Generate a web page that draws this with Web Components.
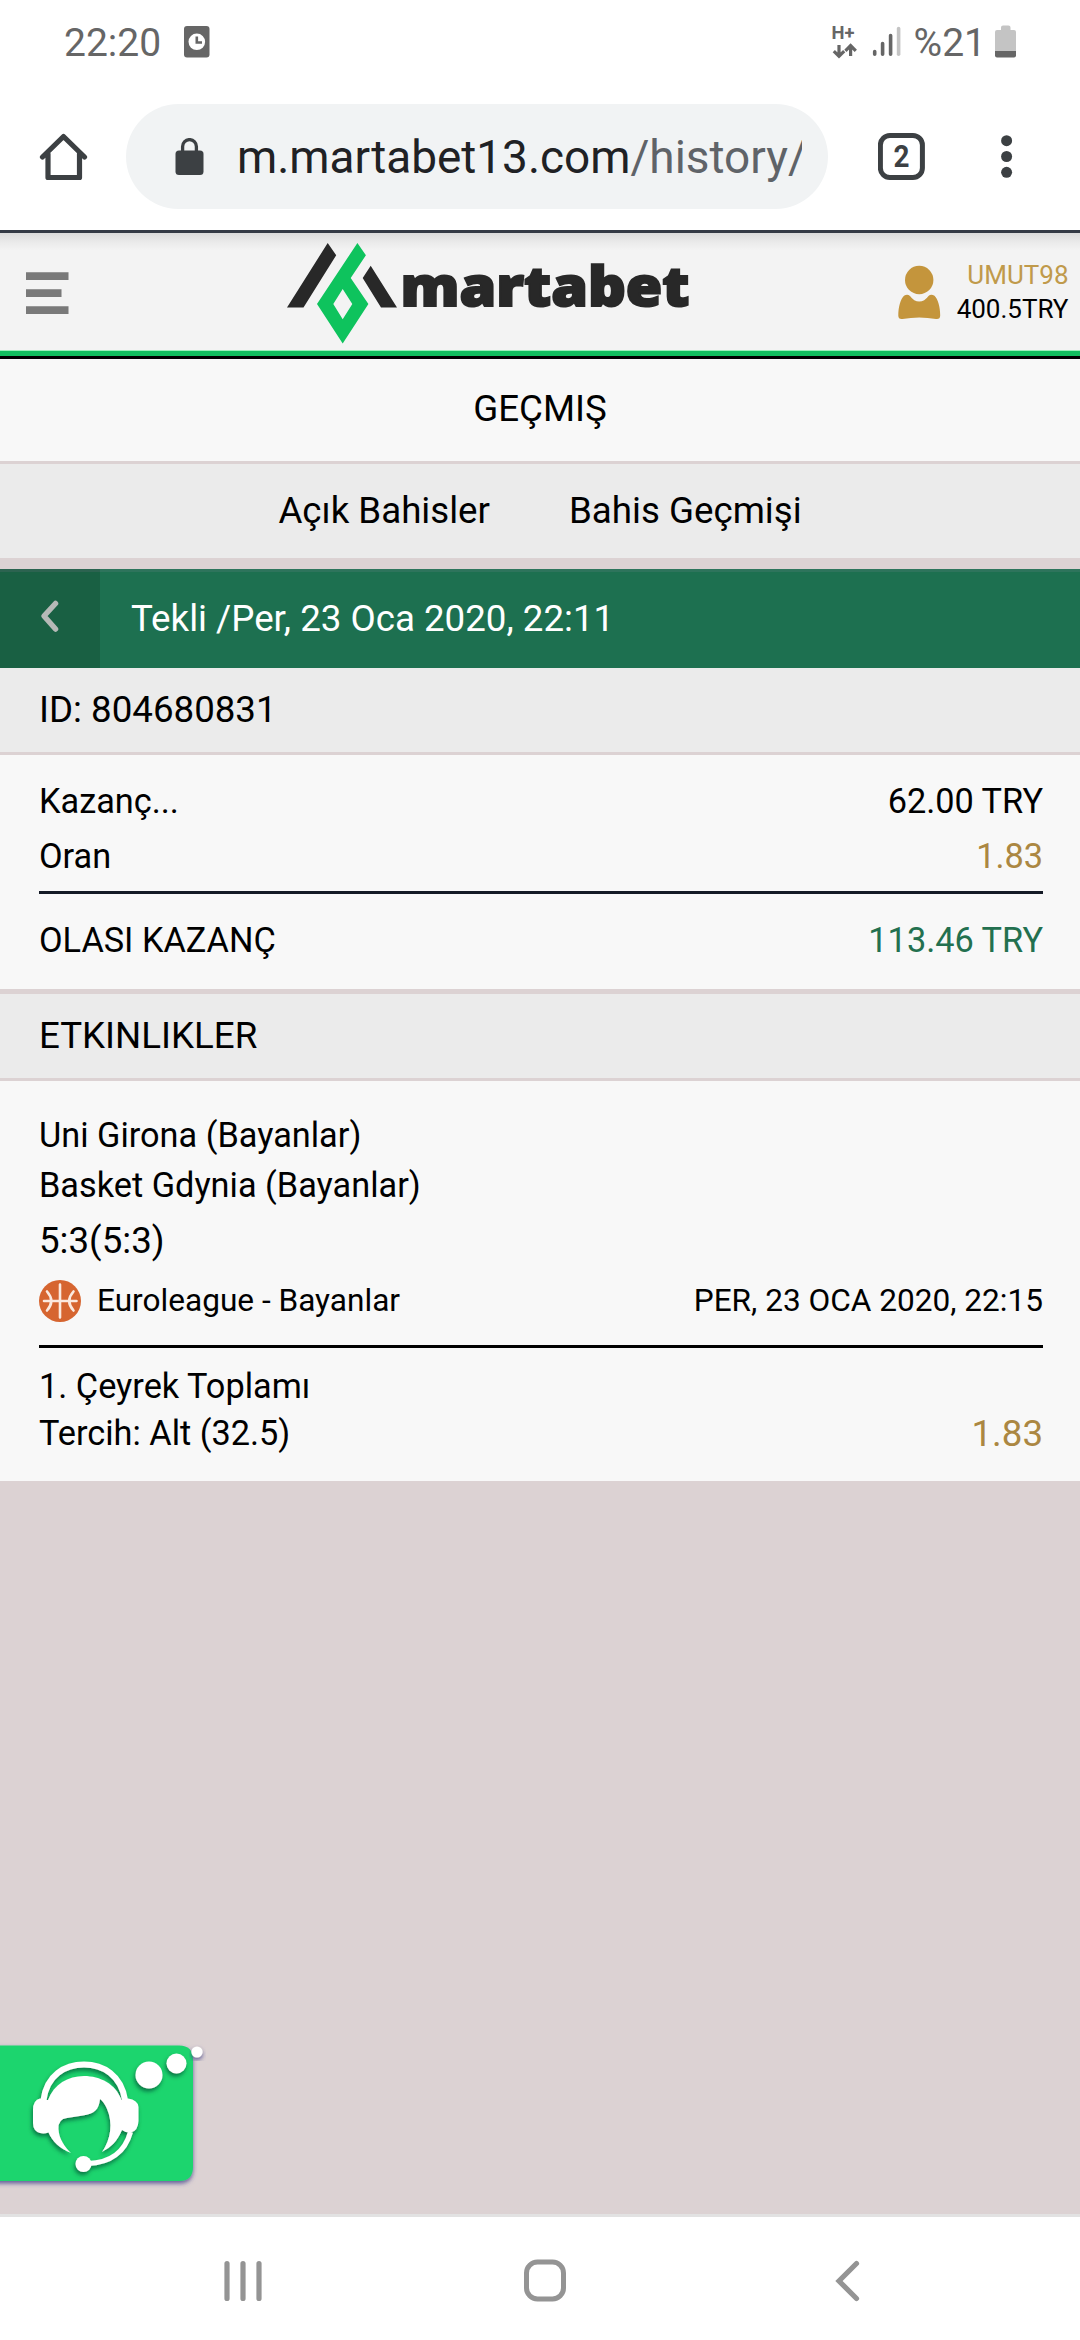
<!DOCTYPE html>
<html lang="tr">
<head>
<meta charset="utf-8">
<title>Geçmiş</title>
<style>
html,body{margin:0;padding:0}
body{width:1080px;height:2340px;overflow:hidden;background:#dcd2d3;font-family:Roboto,"Noto Sans",sans-serif;color:#000;display:flex;flex-direction:column}
main{flex:1;display:flex;flex-direction:column;justify-content:space-between;align-items:stretch}
</style>
</head>
<body>
<status-bar time="22:20" battery="%21"></status-bar>
<browser-bar tabs="2"><span slot="host">m.martabet13.com</span><span slot="path">/history/</span></browser-bar>
<site-header><span slot="user">UMUT98</span><span slot="balance">400.5TRY</span></site-header>
<main>
<div>
<page-title>GEÇMIŞ</page-title>
<tab-strip><span>Açık Bahisler</span><span>Bahis Geçmişi</span></tab-strip>
<bet-header>Tekli /Per, 23 Oca 2020, 22:11</bet-header>
<section-bar>ID: 804680831</section-bar>
<bet-panel style="--pt:19px;--pb:21px">
<stat-row style="--h:55px">Kazanç...<span slot="value">62.00 TRY</span></stat-row>
<stat-row style="--h:55px;--value:#ab8742">Oran<span slot="value">1.83</span></stat-row>
<rule-line style="--m:7px 0 19px;--c:#141a26"></rule-line>
<stat-row style="--h:55px;--value:#23704f">OLASI KAZANÇ<span slot="value">113.46 TRY</span></stat-row>
</bet-panel>
<section-bar style="--gap:5px">ETKINLIKLER</section-bar>
<bet-panel style="--pt:29px;--pb:24px">
<stat-row style="--h:50px">Uni Girona (Bayanlar)</stat-row>
<stat-row style="--h:50px">Basket Gdynia (Bayanlar)</stat-row>
<stat-row style="--h:61px;--f:36.7px">5:3(5:3)</stat-row>
<stat-row style="--h:60px;--f:31.6px"><ball-icon></ball-icon>Euroleague - Bayanlar<span slot="value">PER, 23 OCA 2020, 22:15</span></stat-row>
<rule-line style="--m:14px 0 15px;--c:#000"></rule-line>
<stat-row style="--h:47px">1. Çeyrek Toplamı</stat-row>
<stat-row style="--h:47px;--vf:36.7px;--value:#ab8742">Tercih: Alt (32.5)<span slot="value">1.83</span></stat-row>
</bet-panel>
</div>
<chat-button></chat-button>
</main>
<nav-bar></nav-bar>
<script>
const define=(name,html)=>customElements.define(name,class extends HTMLElement{
  constructor(){
    super();
    const t=document.createElement('template');
    t.innerHTML=html.replace(/\{\{(\w+)\}\}/g,(_,k)=>this.getAttribute(k)||'');
    this.attachShadow({mode:'open'}).append(t.content.cloneNode(true));
  }
});

define('status-bar',`<style>
:host{display:flex;height:86px;background:#fff;color:#666;font-size:39px;line-height:87px;padding:0 63px 0 64px;align-items:stretch;box-sizing:border-box}
svg{display:block}.sp{flex:1}.clock{margin-left:23px}.bat{margin-left:9px}.pct{margin-left:12px}
</style>
<span>{{time}}</span>
<svg class="clock" width="26" height="86"><rect x="0" y="26" width="25.5" height="31.5" rx="3" fill="#666"/><circle cx="12.8" cy="41.8" r="8.3" fill="#fff"/><path d="M12.8 36.5V42.5H18" fill="none" stroke="#666" stroke-width="2.6"/></svg>
<div class="sp"></div>
<svg width="70" height="86" viewBox="832 0 70 86"><text x="831.6" y="39" font-family="Roboto" font-weight="700" font-size="17.5" fill="#666" textLength="23" lengthAdjust="spacingAndGlyphs">H+</text>
<path d="M839 45V55M833.8 51.2L839 56.2L844.2 51.2M850.6 56V47M845.4 50.8L850.6 45.6L855.8 50.8" fill="none" stroke="#666" stroke-width="3.2"/>
<g stroke-width="3.6" stroke-linecap="round" stroke="#666"><path d="M874.7 51.5V54.3M882.6 43.5V54.3M890.6 35.5V54.3"/><path d="M898.6 28.5V54.3" stroke="#c4c4c4"/></g></svg>
<span class="pct">{{battery}}</span>
<svg class="bat" width="22" height="86" viewBox="995 0 22 86"><path d="M1001 30V27.500Q1001 25.500 1003 25.500H1008.500Q1010.500 25.500 1010.500 27.500V30H1014Q1016 30 1016 32V51H995V32Q995 30 997 30Z" fill="#c4c4c4"/><path d="M995 51H1016V55.500Q1016 57.500 1014 57.500H997Q995 57.500 995 55.500Z" fill="#666"/></svg>`);

define('browser-bar',`<style>
:host{display:flex;height:144px;background:#fff;box-sizing:border-box;padding:18px 0 21px;align-items:center}
svg{display:block;flex:none}
.home{margin-left:39px}
.pill{margin-left:38px;width:702px;height:105px;border-radius:53px;background:#f1f3f4;display:flex;align-items:center}
.lock{margin-left:49px}
.url{margin-left:33px;width:565px;overflow:hidden;white-space:nowrap;font-size:45.9px;line-height:108px;color:#202124}
::slotted([slot=path]){color:#5f6368}
.tabs{margin-left:50px}.dots{margin-left:74px}
</style>
<svg class="home" width="49" height="49" viewBox="39 132 49 49"><path d="M42.500 157L63.500 136.500L84.500 157M48 154V177.500H79.500V154" fill="none" stroke="#3c4043" stroke-width="5.200" stroke-linecap="round" stroke-linejoin="round"/></svg>
<div class="pill"><svg class="lock" width="29" height="38" viewBox="175 137 29 38"><rect x="175.500" y="149.500" width="28" height="24.500" rx="3.500" fill="#3c4043"/><path d="M182.600 151V145.500A6.900 6.900 0 0 1 196.400 145.500V151" fill="none" stroke="#3c4043" stroke-width="3.300"/></svg>
<div class="url"><slot name="host"></slot><slot name="path"></slot></div></div>
<svg class="tabs" width="48" height="48" viewBox="878 133 48 48"><rect x="880.400" y="135.500" width="42" height="42" rx="9.500" fill="none" stroke="#3c4043" stroke-width="5"/><text x="893.500" y="166.700" font-family="Roboto" font-weight="700" font-size="32" fill="#3c4043" textLength="16" lengthAdjust="spacingAndGlyphs">{{tabs}}</text></svg>
<svg class="dots" width="14" height="48" viewBox="1000 133 14 48"><g fill="#3c4043"><circle cx="1006.600" cy="140.700" r="5.500"/><circle cx="1006.600" cy="156.500" r="5.500"/><circle cx="1006.600" cy="172.300" r="5.500"/></g></svg>`);

define('site-header',`<style>
:host{display:flex;height:129px;box-sizing:border-box;border-top:3px solid #343a45;border-bottom:3px solid #000;background:linear-gradient(#11bf5f,#11bf5f) 0 100%/100% 5px no-repeat,linear-gradient(#9df0bd,#9df0bd) 0 117px/100% 1px no-repeat,linear-gradient(#dadada,#eaeaea 9px,#f3f3f3 17px);}
svg{display:block;flex:none}
.menu{margin-left:26px}.logo{margin-left:217px}.user{margin-left:206px}
.acct{flex:1;text-align:right;padding:25px 11.5px 0 0;font-size:26px;line-height:34px;display:flex;flex-direction:column}
.acct .n{color:#c09a4b}
</style>
<svg class="menu" width="43" height="117" viewBox="26 233 43 117"><path d="M26 272.200H68.500V280H26ZM26 289.200H61.500V297H26ZM26 306.200H68.500V314H26Z" fill="#797979"/></svg>
<svg class="logo" width="406" height="117" viewBox="286 233 406 117">
<path d="M327.700 243L336.200 255.300L303.500 307.500H287ZM370.700 265.700L397 307.500H381L362.700 278Z" fill="#282828"/>
<path d="M357.400 243L365.900 255.300L350.700 278L368.400 304L342.700 343.500L317 304ZM342.700 289L333.300 304L342.700 319.300L352.300 304Z" fill="#0ec35d" fill-rule="evenodd"/>
<text x="400.500" y="306" font-family="'Noto Sans','Open Sans'" font-weight="900" font-size="55.500" fill="#282828" stroke="#282828" stroke-width="2" textLength="289" lengthAdjust="spacingAndGlyphs">martabet</text></svg>
<svg class="user" width="43" height="117" viewBox="898 233 43 117"><g fill="#c4953c"><circle cx="919.200" cy="280" r="14.200"/><path d="M904 295.700Q907.500 293.500 910 296Q914 301.500 919.200 301.500Q924.500 301.500 928.500 296Q931 293.500 934.500 295.700C938 299 940.200 307 940.200 315.500Q940.200 319.500 936 319Q919.200 316 902.500 319Q898.300 319.500 898.300 315.500C898.300 307 900.500 299 904 295.700Z"/></g></svg>
<div class="acct"><span class="n"><slot name="user"></slot></span><span><slot name="balance"></slot></span></div>`);

define('page-title',`<style>:host{display:block;height:102px;line-height:100px;background:#f8f8f8;border-bottom:3px solid #dcd2d3;text-align:center;font-size:36.7px}</style><slot></slot>`);

define('tab-strip',`<style>:host{display:flex;height:94px;line-height:94px;background:#ebebeb;justify-content:center;gap:79px;font-size:36.7px;margin-bottom:11px}</style><slot></slot>`);

define('bet-header',`<style>
:host{display:flex;height:99px;line-height:99px;background:linear-gradient(#2e745c 3px,#1d7050 3px);color:#fff;font-size:36.7px}
.b{width:100px;background:linear-gradient(#2c6350 3px,#196043 3px);margin-right:31px}
svg{display:block}
</style><div class="b"><svg width="100" height="99"><path d="M55.500 34.500L44 47L55.500 60" fill="none" stroke="#b6b9b7" stroke-width="5.500" stroke-linecap="round" stroke-linejoin="round"/></svg></div><slot></slot>`);

define('section-bar',`<style>:host{display:block;height:84px;line-height:84px;margin-top:var(--gap,0);background:#ebebeb;border-bottom:3px solid #dcd2d3;font-size:36.7px;padding-left:39px}</style><slot></slot>`);

define('bet-panel',`<style>:host{display:flex;flex-direction:column;background:#f8f8f8;padding:var(--pt) 37px var(--pb) 39px}</style><slot></slot>`);

define('stat-row',`<style>:host{display:flex;align-items:center;justify-content:space-between;height:var(--h);line-height:var(--h);font-size:var(--f,34.3px);white-space:nowrap}
.l{display:flex;align-items:center}.v{color:var(--value,#000);font-size:var(--vf,1em)}</style><span class="l"><slot></slot></span><span class="v"><slot name="value"></slot></span>`);

define('rule-line',`<style>:host{display:block;height:3px;margin:var(--m);background:var(--c)}</style>`);

define('ball-icon',`<style>:host{display:block;margin-right:16px}svg{display:block}</style>
<svg width="42" height="42" viewBox="0 0 42 42"><circle cx="21" cy="21" r="21" fill="#d66530"/><path d="M21 4.500V37.500M5 21H37.500M8 11.500Q16.500 21 8 30.500M34.500 11.500Q26 21 34.500 30.500" fill="none" stroke="#fbe9df" stroke-width="2.600" stroke-linecap="round"/></svg>`);

define('chat-button',`<style>:host{display:block;margin-bottom:17px}svg{display:block}</style>
<svg width="215" height="165" viewBox="0 12 215 165">
<defs><filter id="s" x="-20%" y="-20%" width="150%" height="150%"><feDropShadow dx="0" dy="2.500" stdDeviation="2" flood-color="#3b3a86" flood-opacity=".75"/></filter>
<filter id="d" x="-20%" y="-20%" width="150%" height="150%"><feDropShadow dx="-1" dy="3" stdDeviation="2" flood-color="#004b30" flood-opacity=".7"/></filter></defs>
<path d="M-10 25.500H179Q193 25.500 193 39.500V147Q193 161 179 161H-10Z" fill="#1ad56e" filter="url(#s)"/>
<g filter="url(#d)" fill="#fff">
<path d="M43.500 80C47 55 65 44.500 84 44.500S121 55 125 80" fill="none" stroke="#fff" stroke-width="6"/>
<path d="M40 78.500Q45 80 48 80C54 64 68 56 84 56S116 64 121.500 80L128 78.500Q138 80 138.500 87V101Q138 111 131 112.500Q126 113 122 110C117 122 111 127 102 132C111 119 113 103 107 89Q104 82 100 79C99 90 94 94 83 95.500L67 98Q58 99 58.500 109C59 119 65 127 71 133C60 129 52 121 48.500 112.500Q44 114 40 113Q33 111 33 103V90Q33 80 40 78.500Z"/>
<path d="M130.500 112C125 132 110 143 88 143.500" fill="none" stroke="#fff" stroke-width="5"/>
<circle cx="83.500" cy="144" r="8"/><circle cx="149" cy="55" r="13.500"/><circle cx="176.500" cy="43.500" r="10"/></g>
<circle cx="197" cy="32" r="5.600" fill="#fff" filter="url(#s)"/></svg>`);

define('nav-bar',`<style>:host{display:flex;height:126px;box-sizing:border-box;background:#fff;border-top:3px solid #e2e2e2;padding-left:222px}svg{display:block}.h{margin:0 268px 0 259px}</style>
<svg width="42" height="123" viewBox="222 2217 42 123"><path d="M227 2263.500V2298.500M243 2263.500V2298.500M259 2263.500V2298.500" stroke="#949494" stroke-width="5.200" stroke-linecap="round"/></svg>
<svg class="h" width="44" height="123" viewBox="523 2217 44 123"><rect x="526.500" y="2262" width="37" height="37" rx="11" fill="none" stroke="#949494" stroke-width="5"/></svg>
<svg width="26" height="123" viewBox="835 2217 26 123"><path d="M856.500 2263.500L839 2281L856.500 2298.500" fill="none" stroke="#949494" stroke-width="5.200" stroke-linecap="round" stroke-linejoin="miter"/></svg>`);
</script>
</body>
</html>
